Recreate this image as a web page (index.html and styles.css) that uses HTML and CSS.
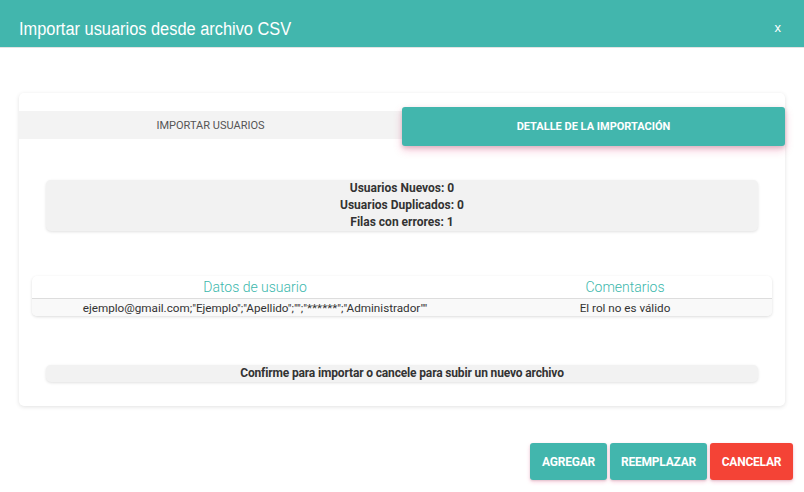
FILE: index.html
```html
<!DOCTYPE html>
<html lang="es">
<head>
  <meta charset="UTF-8">
  <title>Importar usuarios desde archivo CSV</title>
  <link rel="stylesheet" href="styles.css">
</head>
<body>
  <div class="modal">
    <div class="modal-header">
      <h1>Importar usuarios desde archivo CSV</h1>
      <span class="close">x</span>
    </div>

    <div class="modal-body">
      <div class="card">
        <div class="tabs">
          <div class="tab">IMPORTAR USUARIOS</div>
          <div class="tab active">DETALLE DE LA IMPORTACIÓN</div>
        </div>

        <div class="summary">
          <div>Usuarios Nuevos: 0</div>
          <div>Usuarios Duplicados: 0</div>
          <div>Filas con errores: 1</div>
        </div>

        <table class="errors">
          <thead>
            <tr>
              <th>Datos de usuario</th>
              <th>Comentarios</th>
            </tr>
          </thead>
          <tbody>
            <tr>
              <td>ejemplo@gmail.com;"Ejemplo";"Apellido";"";"******";"Administrador""</td>
              <td>El rol no es válido</td>
            </tr>
          </tbody>
        </table>

        <div class="confirm">Confirme para importar o cancele para subir un nuevo archivo</div>
      </div>
    </div>

    <div class="modal-footer">
      <button class="btn btn-add">AGREGAR</button>
      <button class="btn btn-replace">REEMPLAZAR</button>
      <button class="btn btn-danger">CANCELAR</button>
    </div>
  </div>
</body>
</html>
```

FILE: styles.css
```css
body {
  margin: 0;
  font-family: Roboto, "Liberation Sans", Arial, sans-serif;
  background: #fff;
  color: #333;
}
.modal {
  width: 804px;
  height: 492px;
}
.modal-header {
  height: 47px;
  background: #42b6ad;
  border-bottom: 1px solid #e3e3e3;
  display: flex;
  align-items: center;
  justify-content: space-between;
  padding: 0 23px 0 19px;
  color: #fff;
}
.modal-header h1 {
  margin: 12px 0 0;
  font-family: "Liberation Sans", Arial, sans-serif;
  font-weight: normal;
  font-size: 18px;
  transform: scaleX(0.91);
  transform-origin: left center;
}
.close {
  font-family: "Liberation Sans", Arial, sans-serif;
  font-size: 13px;
  margin-top: 8px;
}
.modal-body {
  padding: 45px 19px 0;
}
.card {
  background: #fff;
  border-radius: 5px;
  box-shadow: 0 1px 4px rgba(0, 0, 0, 0.12);
  padding: 14px 0 0;
  height: 313px;
  box-sizing: border-box;
}
.tabs {
  display: flex;
  height: 28px;
  margin-top: 4px;
  background: #f3f3f3;
}
.tab {
  width: 50%;
  display: flex;
  align-items: center;
  justify-content: center;
  font-size: 11px;
  color: #555;
}
.tab.active {
  background: #42b6ad;
  color: #fff;
  font-weight: bold;
  border-radius: 3px;
  margin: -4px 0 -7px;
  box-shadow: 0 4px 8px rgba(233, 30, 99, 0.25), 0 2px 4px rgba(0, 0, 0, 0.15);
}
.summary {
  margin: 41px 27px 0;
  background: #f2f2f2;
  border-radius: 5px;
  box-shadow: 0 1px 3px rgba(0, 0, 0, 0.12);
  text-align: center;
  font-size: 12px;
  font-weight: bold;
  line-height: 17px;
  color: #333;
}
.errors {
  margin: 45px 13px 0;
  width: calc(100% - 26px);
  border-collapse: collapse;
  border-radius: 5px;
  box-shadow: 0 1px 3px rgba(0, 0, 0, 0.14);
  overflow: hidden;
  table-layout: fixed;
}
.errors th {
  font-weight: 300;
  font-size: 14px;
  color: #3bb7ac;
  height: 22px;
  padding: 0;
  border-bottom: 1px solid #ddd;
}
.errors th:first-child,
.errors td:first-child {
  width: 446px;
}
.errors td {
  background: #f9f9f9;
  font-size: 11.7px;
  text-align: center;
  height: 17px;
  padding: 0;
  color: #333;
}
.confirm {
  margin: 49px 27px 0;
  background: #f2f2f2;
  border-radius: 5px;
  box-shadow: 0 1px 3px rgba(0, 0, 0, 0.12);
  text-align: center;
  font-size: 12px;
  font-weight: bold;
  line-height: 17px;
  color: #333;
  letter-spacing: -0.15px;
}
.modal-footer {
  display: flex;
  justify-content: flex-end;
  gap: 3px;
  padding: 37px 11px 0 0;
}
.btn {
  font-family: Roboto, "Liberation Sans", Arial, sans-serif;
  background: #42b6ad;
  color: #fff;
  border: none;
  border-radius: 3px;
  font-size: 12px;
  font-weight: bold;
  height: 37px;
  padding: 0;
  letter-spacing: -0.2px;
  box-shadow: 0 2px 4px rgba(233, 30, 99, 0.2), 0 1px 2px rgba(0, 0, 0, 0.12);
  cursor: pointer;
}
.btn-add {
  width: 77px;
}
.btn-replace {
  width: 97px;
}
.btn-danger {
  width: 83px;
  background: #f44336;
}
```
